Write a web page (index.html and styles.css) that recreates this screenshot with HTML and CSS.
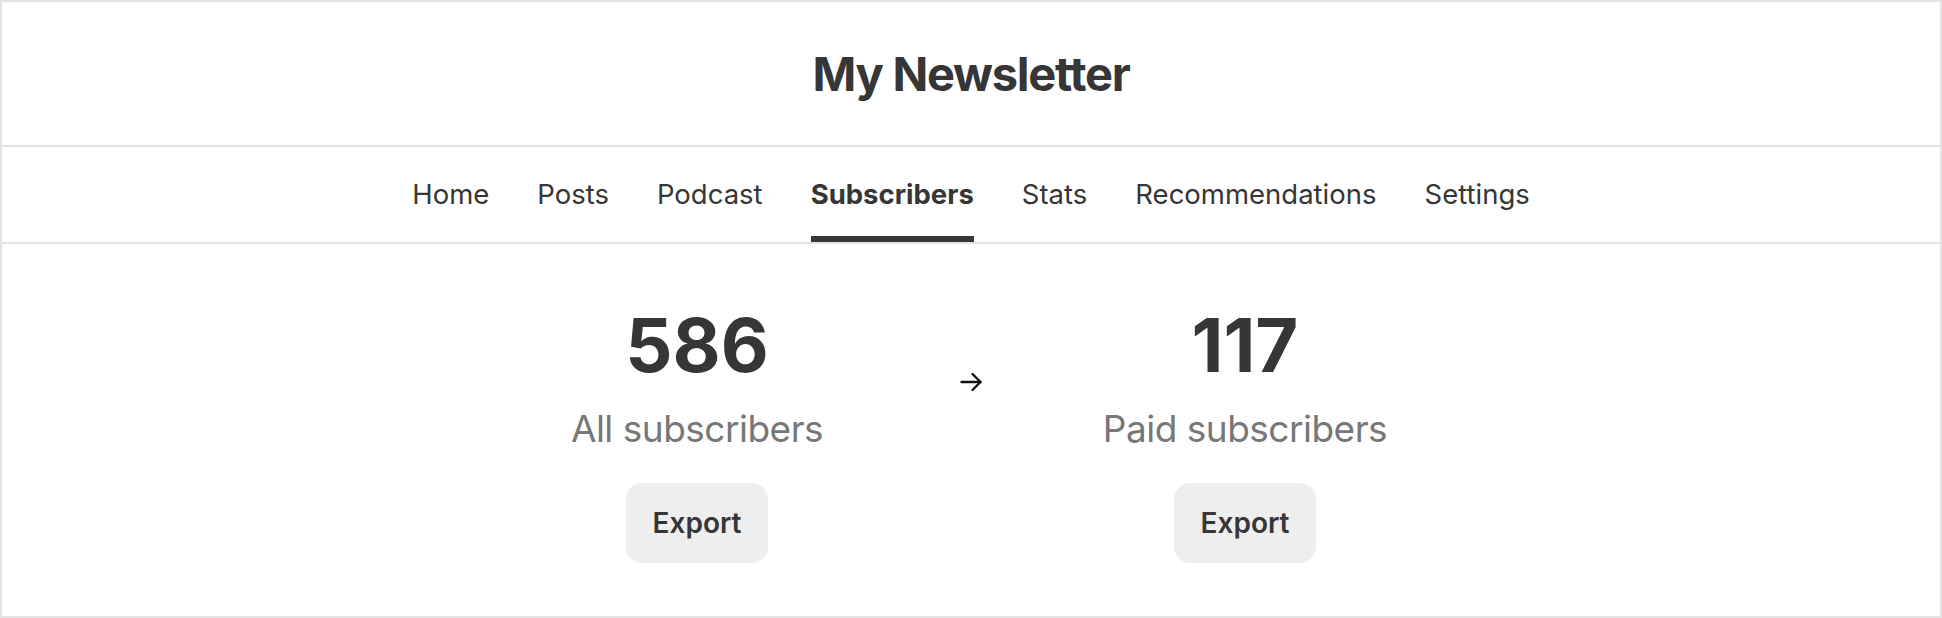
FILE: index.html
```html
<!DOCTYPE html>
<html lang="en">
<head>
<meta charset="utf-8">
<title>My Newsletter</title>
<link rel="stylesheet" href="styles.css">
</head>
<body>
<div class="frame">
  <header class="masthead">
    <h1 class="title">My Newsletter</h1>
  </header>
  <nav class="tabs">
    <a class="tab" href="#">Home</a>
    <a class="tab" href="#">Posts</a>
    <a class="tab" href="#">Podcast</a>
    <a class="tab active" href="#">Subscribers</a>
    <a class="tab" href="#">Stats</a>
    <a class="tab" href="#">Recommendations</a>
    <a class="tab" href="#">Settings</a>
  </nav>
  <main class="stats">
    <section class="stat">
      <div class="stat-number">586</div>
      <div class="stat-label">All subscribers</div>
      <button class="export">Export</button>
    </section>
    <div class="arrow">
      <svg width="22" height="20" viewBox="0 0 22 20" fill="none" stroke="#111" stroke-width="2.3" stroke-linecap="round" stroke-linejoin="round">
        <path d="M1.5 10H20.5"/>
        <path d="M12.5 2L20.5 10L12.5 18"/>
      </svg>
    </div>
    <section class="stat">
      <div class="stat-number">117</div>
      <div class="stat-label">Paid subscribers</div>
      <button class="export">Export</button>
    </section>
  </main>
</div>
</body>
</html>
```

FILE: styles.css
```css
* { box-sizing: border-box; }

html, body {
  margin: 0;
  padding: 0;
  background: #ffffff;
}

body {
  font-family: Inter, "Noto Sans", "Liberation Sans", sans-serif;
  color: #363636;
}

.frame {
  width: 1942px;
  height: 618px;
  border: 2px solid #e3e3e3;
  display: flex;
  flex-direction: column;
}

.masthead {
  height: 145px;
  border-bottom: 2px solid #e3e3e3;
  display: flex;
  align-items: center;
  justify-content: center;
}

.title {
  margin: 0;
  font-size: 47px;
  font-weight: 700;
  letter-spacing: -1.25px;
  line-height: 1;
  color: #363636;
}

.tabs {
  height: 97px;
  border-bottom: 2px solid #e3e3e3;
  display: flex;
  justify-content: center;
  gap: 48px;
}

.tab {
  height: 95px;
  padding-top: 6px;
  border-bottom: 6px solid transparent;
  display: flex;
  align-items: center;
  font-size: 27.5px;
  line-height: 1.2;
  color: #363636;
  text-decoration: none;
}

.tab.active {
  font-weight: 700;
  border-bottom-color: #363636;
}

.stats {
  flex: 1;
  display: flex;
  justify-content: center;
  align-items: flex-start;
  padding-top: 64px;
  gap: 103px;
}

.stat {
  width: 320px;
  display: flex;
  flex-direction: column;
  align-items: center;
}

.stat-number {
  font-size: 74px;
  font-weight: 700;
  line-height: 74px;
  color: #363636;
}

.stat-label {
  margin-top: 25px;
  font-size: 37px;
  line-height: 44px;
  color: #777777;
  letter-spacing: -0.5px;
}

.export {
  margin-top: 32px;
  width: 142px;
  height: 80px;
  border: none;
  border-radius: 16px;
  background: #eeeeee;
  font-family: inherit;
  font-size: 28px;
  font-weight: 600;
  color: #363636;
  padding: 0;
}

.arrow {
  width: 22px;
  height: 20px;
  margin-top: 64px;
  display: flex;
}
```
